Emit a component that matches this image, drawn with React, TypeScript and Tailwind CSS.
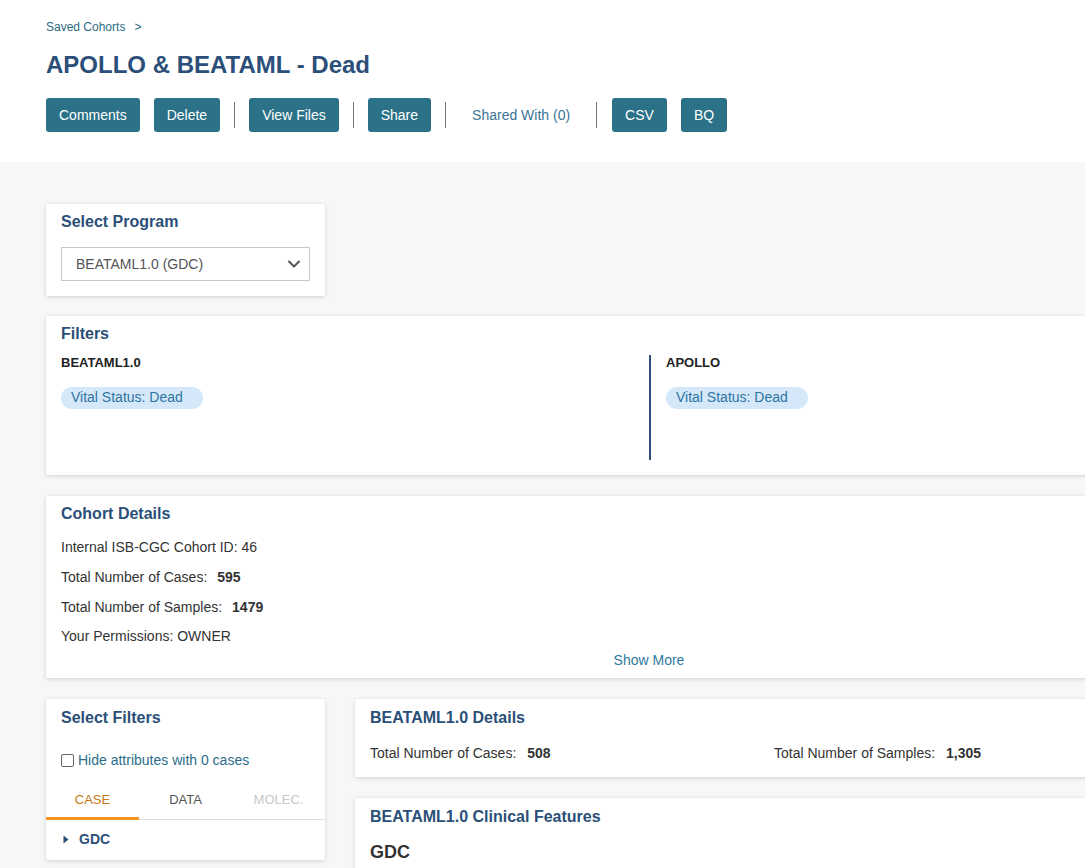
import React from "react";

const Btn = ({ children }: { children: React.ReactNode }) => (
  <button className="h-[34px] px-[13px] rounded-[3px] bg-[#2b7187] text-white text-[14px] leading-none">
    {children}
  </button>
);

const Sep = () => <div className="w-px h-[26px] bg-[#777]" />;

const Card = ({ className = "", children }: { className?: string; children: React.ReactNode }) => (
  <div className={"bg-white rounded-[2px] shadow-[0_1px_4px_rgba(0,0,0,0.16)] " + className}>{children}</div>
);

const Pill = () => (
  <span className="inline-flex items-center h-[22px] pl-[10px] pr-[20px] rounded-full bg-[#d5e8fa] text-[#2e74a0] text-[14px]">
    Vital Status: Dead
  </span>
);

export default function App() {
  return (
    <div className="w-[1085px] h-[868px] overflow-hidden bg-[#f7f7f7] font-['Liberation_Sans',Arial,sans-serif] text-[#333]">
      {/* Header */}
      <div className="bg-white h-[162px] pl-[46px] pt-[19px]">
        <div className="text-[12px] leading-[16px] text-[#2a6a82] flex gap-[9px]">
          <span>Saved Cohorts</span>
          <span>&gt;</span>
        </div>
        <h1 className="mt-[16px] text-[24px] leading-[28px] font-bold text-[#2b4f78]">APOLLO &amp; BEATAML - Dead</h1>
        <div className="mt-[19px] flex items-center">
          <Btn>Comments</Btn>
          <div className="w-[14px]" />
          <Btn>Delete</Btn>
          <div className="w-[14px]" />
          <Sep />
          <div className="w-[14px]" />
          <Btn>View Files</Btn>
          <div className="w-[14px]" />
          <Sep />
          <div className="w-[14px]" />
          <Btn>Share</Btn>
          <div className="w-[14px]" />
          <Sep />
          <span className="px-[26px] text-[14px] text-[#3a7496]">Shared With (0)</span>
          <Sep />
          <div className="w-[15px]" />
          <Btn>CSV</Btn>
          <div className="w-[14px]" />
          <Btn>BQ</Btn>
        </div>
      </div>

      {/* Body */}
      <div className="pl-[46px] pt-[42px] w-[1252px] flex flex-col gap-[20px]">
        {/* Select Program */}
        <Card className="w-[279px] px-[15px] pt-[7px] pb-[15px]">
          <div className="text-[16px] leading-[22px] font-bold text-[#2b4f78]">Select Program</div>
          <div className="mt-[14px] h-[34px] border border-[#c8c8c8] flex items-center justify-between pl-[14px] pr-[7px]">
            <span className="text-[14px] text-[#555]">BEATAML1.0 (GDC)</span>
            <svg width="16" height="16" viewBox="0 0 16 16" fill="none">
              <path d="M3 5.5l5 5 5-5" stroke="#555" strokeWidth="2" strokeLinecap="round" strokeLinejoin="round" />
            </svg>
          </div>
        </Card>

        {/* Filters */}
        <Card className="px-[15px] pt-[7px] pb-[15px]">
          <div className="text-[16px] leading-[22px] font-bold text-[#2b4f78]">Filters</div>
          <div className="mt-[10px] grid grid-cols-2">
            <div className="h-[105px]">
              <div className="text-[13px] leading-[16px] font-bold text-[#222]">BEATAML1.0</div>
              <div className="mt-[14px]">
                <Pill />
              </div>
            </div>
            <div className="h-[105px] border-l-2 border-[#2b4f78] pl-[15px]">
              <div className="text-[13px] leading-[16px] font-bold text-[#222]">APOLLO</div>
              <div className="mt-[14px]">
                <Pill />
              </div>
            </div>
          </div>
        </Card>

        {/* Cohort Details */}
        <Card className="px-[15px] pt-[7px] pb-[9px] mt-px">
          <div className="text-[16px] leading-[22px] font-bold text-[#2b4f78]">Cohort Details</div>
          <div className="mt-[12px] flex flex-col gap-[10px] text-[14px] leading-[20px] text-[#333]">
            <div>Internal ISB-CGC Cohort ID: 46</div>
            <div>
              Total Number of Cases:<span className="ml-[10px] font-bold">595</span>
            </div>
            <div>
              Total Number of Samples:<span className="ml-[10px] font-bold">1479</span>
            </div>
            <div className="-mt-px">Your Permissions: OWNER</div>
          </div>
          <div className="mt-[5px] text-center text-[14px] leading-[18px] text-[#2f7aa0]">Show More</div>
        </Card>

        {/* Bottom row */}
        <div className="flex gap-[30px] mt-px items-start">
          <Card className="w-[279px] shrink-0 pt-[8px] pb-[2px]">
            <div className="px-[15px] text-[16px] leading-[22px] font-bold text-[#2b4f78]">Select Filters</div>
            <label className="mt-[22px] px-[15px] flex items-center gap-[4px] text-[14px] leading-[18px] text-[#2c6d8c]">
              <span className="w-[13px] h-[13px] border border-[#666] rounded-[2px] bg-white" />
              Hide attributes with 0 cases
            </label>
            <div className="mt-[23px] grid grid-cols-3 border-b border-[#ddd] text-[13px] leading-[16px]">
              <div className="text-center text-[#c77a17] pb-[9px] border-b-[3px] border-[#f0961f] -mb-px">CASE</div>
              <div className="text-center text-[#555] pb-[9px]">DATA</div>
              <div className="text-center text-[#c8c8c8] pb-[9px]">MOLEC.</div>
            </div>
            <div className="h-[38px] px-[17px] flex items-center gap-[10px]">
              <svg width="6" height="9" viewBox="0 0 6 9">
                <path d="M0.5 0.5L5.5 4.5L0.5 8.5Z" fill="#2b4f78" />
              </svg>
              <span className="text-[14px] font-bold text-[#2b4f78]">GDC</span>
            </div>
          </Card>

          <div className="flex-1 flex flex-col gap-[21px]">
            <Card className="px-[15px] pt-[8px] h-[78px]">
              <div className="text-[16px] leading-[22px] font-bold text-[#2b4f78]">BEATAML1.0 Details</div>
              <div className="mt-[16px] grid grid-cols-[404px_1fr] text-[14px] leading-[16px] text-[#333]">
                <div>
                  Total Number of Cases:<span className="ml-[11px] font-bold">508</span>
                </div>
                <div>
                  Total Number of Samples:<span className="ml-[11px] font-bold">1,305</span>
                </div>
              </div>
            </Card>
            <Card className="px-[15px] pt-[8px] h-[120px]">
              <div className="text-[16px] leading-[22px] font-bold text-[#2b4f78]">BEATAML1.0 Clinical Features</div>
              <div className="mt-[13px] text-[18px] leading-[22px] font-bold text-[#333]">GDC</div>
            </Card>
          </div>
        </div>
      </div>
    </div>
  );
}
